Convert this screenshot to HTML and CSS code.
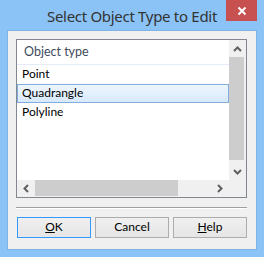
FILE: index.html
```html
<!DOCTYPE html>
<html>
<head>
<meta charset="utf-8">
<link rel="stylesheet" href="styles.css">
</head>
<body>
<div class="window">
  <div class="titlebar">
    <span class="tb-spacer"></span>
    <div class="title">Select Object Type to Edit</div>
    <div class="tb-right">
      <div class="close">
        <svg width="10" height="10" viewBox="0 0 10 10"><path d="M1.5 1.5 L8.5 8.5 M8.5 1.5 L1.5 8.5" stroke="#fff" stroke-width="2" fill="none"/></svg>
      </div>
    </div>
  </div>
  <div class="client">
    <div class="listbox">
      <div class="lv-top">
        <div class="lv-list">
          <div class="lv-header">Object type</div>
          <div class="lv-row">Point</div>
          <div class="lv-row selected">Quadrangle</div>
          <div class="lv-row">Polyline</div>
        </div>
        <div class="vscroll">
          <div class="sb-btn"><svg width="9" height="6" viewBox="0 0 9 6"><path d="M1 5 L4.5 1.5 L8 5" stroke="#606060" stroke-width="2" fill="none"/></svg></div>
          <div class="vthumb"></div>
          <div class="sb-fill"></div>
          <div class="sb-btn"><svg width="9" height="6" viewBox="0 0 9 6"><path d="M1 1 L4.5 4.5 L8 1" stroke="#606060" stroke-width="2" fill="none"/></svg></div>
        </div>
      </div>
      <div class="lv-bottom">
        <div class="hscroll">
          <div class="sb-btn h"><svg width="6" height="9" viewBox="0 0 6 9"><path d="M5 1 L1.5 4.5 L5 8" stroke="#606060" stroke-width="2" fill="none"/></svg></div>
          <div class="hthumb"></div>
          <div class="sb-fill"></div>
          <div class="sb-btn h"><svg width="6" height="9" viewBox="0 0 6 9"><path d="M1 1 L4.5 4.5 L1 8" stroke="#606060" stroke-width="2" fill="none"/></svg></div>
        </div>
        <div class="corner"></div>
      </div>
    </div>
    <div class="separator"></div>
    <div class="buttons">
      <div class="btn default"><u>O</u>K</div>
      <div class="btn">Cancel</div>
      <div class="btn"><u>H</u>elp</div>
    </div>
  </div>
</div>
</body>
</html>
```
FILE: styles.css
```css
* { box-sizing: border-box; }
html, body { margin: 0; padding: 0; }
body {
  width: 264px;
  height: 257px;
  overflow: hidden;
  font-family: Lato, "Noto Sans", sans-serif;
  font-size: 12px;
}
.window {
  width: 264px;
  height: 257px;
  background: #8bc3f6;
  display: flex;
  flex-direction: column;
}
.titlebar {
  height: 30px;
  display: grid;
  grid-template-columns: 1fr auto 1fr;
}
.title {
  font-family: "Noto Sans", sans-serif;
  font-size: 15px;
  color: #333;
  line-height: 20px;
  padding-top: 6px;
  white-space: nowrap;
  letter-spacing: -0.3px;
}
.tb-right {
  display: flex;
  justify-content: flex-end;
  padding-right: 7px;
}
.close {
  width: 31px;
  height: 21px;
  background: #c75050;
  display: flex;
  align-items: center;
  justify-content: center;
}
.client {
  margin: 0 7px;
  border: 1px solid #7fb3e6;
  background: #f0f0f0;
  height: 220px;
  padding: 8px 0 0 8px;
}
.listbox {
  width: 231px;
  height: 159px;
  border: 1px solid #828790;
  background: #fff;
  display: flex;
  flex-direction: column;
}
.lv-top {
  height: 140px;
  display: flex;
}
.lv-list {
  width: 212px;
}
.lv-header {
  height: 25px;
  border-bottom: 1px solid #e3ecf8;
  padding-left: 7px;
  line-height: 24px;
  color: #3c4b5e;
  font-size: 12.5px;
}
.lv-row {
  height: 19px;
  line-height: 18px;
  padding-left: 5px;
  color: #000;
}
.lv-row.selected {
  border: 1px solid #84acdd;
  background: linear-gradient(#eef6fe, #d7e9fc);
  padding-left: 4px;
  line-height: 16px;
}
.vscroll {
  width: 17px;
  background: #f0f0f0;
  display: flex;
  flex-direction: column;
}
.sb-btn {
  width: 17px;
  height: 17px;
  flex: none;
  display: flex;
  align-items: center;
  justify-content: center;
}
.sb-btn.h { width: 18px; }
.vthumb {
  width: 15px;
  height: 103px;
  background: #cdcdcd;
  flex: none;
}
.sb-fill { flex: 1; }
.lv-bottom {
  height: 17px;
  display: flex;
}
.hscroll {
  width: 212px;
  display: flex;
  background: #f0f0f0;
}
.hthumb {
  width: 143px;
  height: 16px;
  background: #cdcdcd;
  flex: none;
}
.corner {
  width: 17px;
  background: #f0f0f0;
}
.separator {
  width: 231px;
  height: 2px;
  margin-top: 9px;
  border-top: 1px solid #a0a0a0;
  border-bottom: 1px solid #fff;
}
.buttons {
  margin-top: 8px;
  margin-left: 1px;
  display: flex;
  gap: 4px;
}
.btn {
  width: 74px;
  height: 21px;
  border: 1px solid #adadad;
  background: linear-gradient(#f0f0f0, #e5e5e5);
  text-align: center;
  line-height: 18px;
  color: #000;
}
.btn.default {
  border-color: #3399ff;
}
```
